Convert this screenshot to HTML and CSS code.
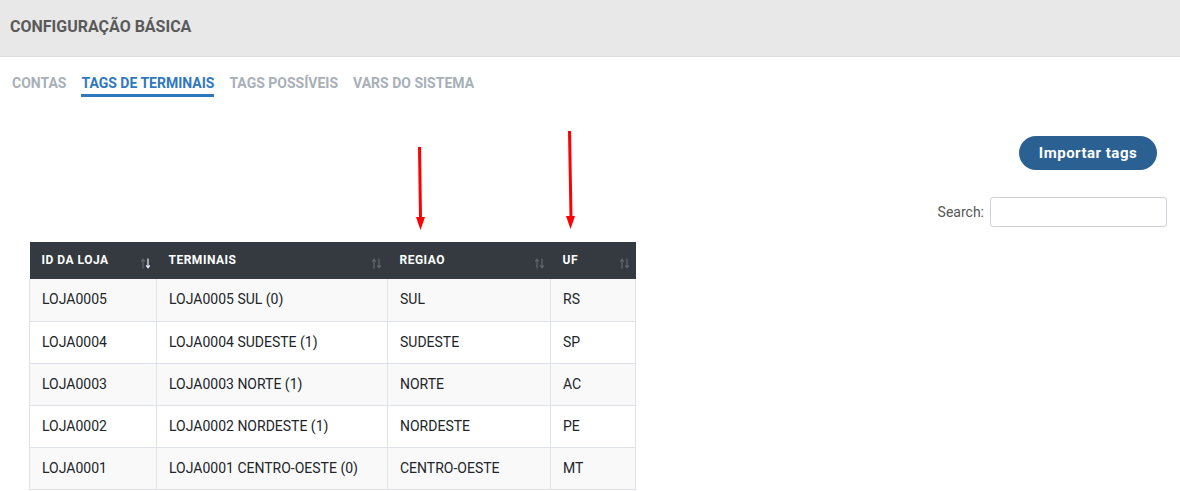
FILE: index.html
```html
<!DOCTYPE html>
<html lang="pt">
<head>
<meta charset="utf-8">
<title>Configuração Básica</title>
<link rel="stylesheet" href="styles.css">
</head>
<body>
<header class="topbar">
  <h1 class="title">CONFIGURAÇÃO BÁSICA</h1>
</header>
<nav class="tabs">
  <a class="tab">CONTAS</a>
  <a class="tab active">TAGS DE TERMINAIS</a>
  <a class="tab">TAGS POSSÍVEIS</a>
  <a class="tab">VARS DO SISTEMA</a>
</nav>
<main class="content">
  <div class="toolbar">
    <button class="btn-import">Importar tags</button>
    <label class="search">Search: <input type="text" class="search-input"></label>
  </div>
  <table class="grid">
    <thead>
      <tr>
        <th class="c1">ID DA LOJA<svg class="sort" width="9" height="11" viewBox="0 0 9 11"><path class="up" d="M2 10.5V2M0.2 3.6L2 1.2 3.8 3.6"/><path class="down on" d="M7 0.5V9M5.2 7.4L7 9.8 8.8 7.4"/></svg></th>
        <th class="c2">TERMINAIS<svg class="sort" width="9" height="11" viewBox="0 0 9 11"><path class="up" d="M2 10.5V2M0.2 3.6L2 1.2 3.8 3.6"/><path class="down" d="M7 0.5V9M5.2 7.4L7 9.8 8.8 7.4"/></svg></th>
        <th class="c3">REGIAO<svg class="sort" width="9" height="11" viewBox="0 0 9 11"><path class="up" d="M2 10.5V2M0.2 3.6L2 1.2 3.8 3.6"/><path class="down" d="M7 0.5V9M5.2 7.4L7 9.8 8.8 7.4"/></svg></th>
        <th class="c4">UF<svg class="sort" width="9" height="11" viewBox="0 0 9 11"><path class="up" d="M2 10.5V2M0.2 3.6L2 1.2 3.8 3.6"/><path class="down" d="M7 0.5V9M5.2 7.4L7 9.8 8.8 7.4"/></svg></th>
      </tr>
    </thead>
    <tbody>
      <tr><td>LOJA0005</td><td>LOJA0005 SUL (0)</td><td>SUL</td><td>RS</td></tr>
      <tr><td>LOJA0004</td><td>LOJA0004 SUDESTE (1)</td><td>SUDESTE</td><td>SP</td></tr>
      <tr><td>LOJA0003</td><td>LOJA0003 NORTE (1)</td><td>NORTE</td><td>AC</td></tr>
      <tr><td>LOJA0002</td><td>LOJA0002 NORDESTE (1)</td><td>NORDESTE</td><td>PE</td></tr>
      <tr><td>LOJA0001</td><td>LOJA0001 CENTRO-OESTE (0)</td><td>CENTRO-OESTE</td><td>MT</td></tr>
    </tbody>
  </table>
</main>
<svg class="annot" width="1180" height="491" viewBox="0 0 1180 491" aria-hidden="true">
  <line x1="419.5" y1="147" x2="420.5" y2="218" stroke="#f00" stroke-width="3"/>
  <polygon points="416,217 425,217 420.5,230" fill="#f00"/>
  <line x1="569.5" y1="131" x2="571" y2="217" stroke="#f00" stroke-width="3"/>
  <polygon points="566,216 575,216 570.5,229" fill="#f00"/>
</svg>
</body>
</html>
```
FILE: styles.css
```css
html, body {
  margin: 0;
  padding: 0;
  background: #fff;
  font-family: Roboto, "Liberation Sans", Arial, sans-serif;
}
body { position: relative; width: 1180px; height: 491px; overflow: hidden; }

.topbar {
  height: 56px;
  background: #e8e8e8;
  border-bottom: 1px solid #dcdcdc;
  display: flex;
  align-items: center;
  padding-left: 10px;
}
.title {
  margin: 0;
  font-size: 16px;
  font-weight: 700;
  color: #5a5a5a;
  padding-bottom: 3px;
}

.tabs {
  display: flex;
  gap: 15px;
  padding: 18px 12px 0;
}
.tab {
  font-size: 14px;
  line-height: 16px;
  font-weight: 700;
  color: #a7b0b8;
  padding-bottom: 3px;
  border-bottom: 3px solid transparent;
}
.tab.active {
  color: #2f78bd;
  border-bottom-color: #2f78bd;
}

.toolbar {
  display: flex;
  flex-direction: column;
  align-items: flex-end;
  padding-top: 39px;
}
.btn-import {
  margin-right: 23px;
  width: 138px;
  height: 34px;
  border: none;
  border-radius: 17px;
  background: #2b6192;
  color: #fff;
  font-family: Roboto, "Liberation Sans", Arial, sans-serif;
  font-size: 15px;
  font-weight: 700;
  letter-spacing: 0.5px;
  padding: 0;
}
.search {
  margin-top: 27px;
  margin-right: 13px;
  display: flex;
  align-items: center;
  gap: 6px;
  font-size: 14px;
  color: #555;
}
.search-input {
  width: 177px;
  height: 30px;
  box-sizing: border-box;
  border: 1px solid #cdd0d6;
  border-radius: 3px;
  margin: 0;
}

.grid {
  margin: 15px 0 0 29px;
  border-collapse: collapse;
  width: 606px;
  table-layout: fixed;
  font-size: 14px;
  color: #212529;
}
.grid th {
  background: #343a40;
  color: #fff;
  height: 37px;
  box-sizing: border-box;
  text-align: left;
  font-size: 12px;
  font-weight: 700;
  letter-spacing: 0.5px;
  padding: 0 0 1px 12px;
  position: relative;
  border: none;
}
.c1 { width: 127px; }
.c2 { width: 231px; }
.c3 { width: 163px; }
.c4 { width: 85px; }
.sort {
  position: absolute;
  right: 7px;
  top: 16px;
  fill: none;
  stroke-width: 1.2;
}
.sort .up, .sort .down { stroke: #5f666d; }
.sort .on { stroke: #e8eeff; }
.grid td {
  height: 42px;
  box-sizing: border-box;
  padding: 0 0 1px 12px;
  border: 1px solid #dee2e6;
  border-top: none;
}
.grid tbody tr:nth-child(odd) td { background: #f9f9f9; }
.grid tbody tr:nth-child(even) td { background: #fff; }

.annot {
  position: absolute;
  left: 0;
  top: 0;
  pointer-events: none;
}
```
